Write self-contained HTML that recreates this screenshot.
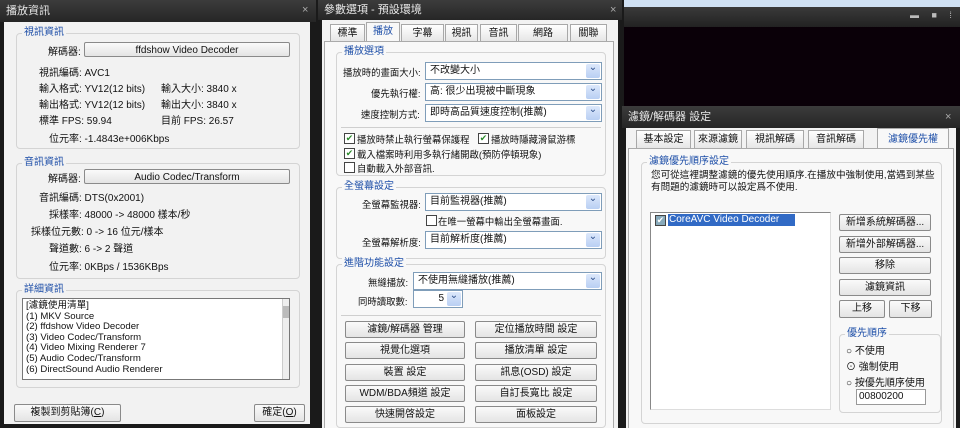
<!DOCTYPE html>
<html><head><meta charset="utf-8"><style>
*{margin:0;padding:0;box-sizing:border-box}
body{width:960px;height:428px;background:#1a1a1a;position:relative;overflow:hidden;font-family:"Liberation Sans","Noto Sans CJK TC",sans-serif;font-size:10px;color:#111}
.a{position:absolute;white-space:nowrap}
.tb{position:absolute;background:linear-gradient(#3c3c3c,#262626);color:#e8e8e8;font-size:11px;padding-left:6px;line-height:20px}
.x{position:absolute;color:#aaa;font-size:11px}
.body{position:absolute;background:#f2f2f2}
.g{position:absolute;border:1px solid #d4d4d4;border-radius:4px}
.gl{position:absolute;top:-8px;left:5px;background:#f2f2f2;color:#1e4fa8;padding:0 2px;font-size:10px;line-height:14px}
.btn{position:absolute;border:1px solid #8a8a8a;border-radius:2px;background:linear-gradient(#fafafa,#e4e4e4);text-align:center;font-size:10px;line-height:15px}
.cb{position:absolute;border:1px solid #7f9db9;background:#fff;height:18px;padding-left:4px;line-height:16px;font-size:10px}
.cb:after{content:"⌄";position:absolute;right:1px;top:1px;width:14px;height:14px;background:linear-gradient(#dce8fb,#b9cff3);border-radius:2px;color:#2d4f8a;font-size:10px;line-height:8px;text-align:center}
.ck{position:absolute;width:11px;height:11px;border:1px solid #444;background:#fff;font-size:9px;line-height:9px;color:#2a8a2a;text-align:center}
.tab{position:absolute;border:1px solid #a8a8a8;border-bottom:none;background:linear-gradient(#fff,#e6e6e6);text-align:center;font-size:10px;line-height:17px}
.ln{position:absolute;height:1px;background:#cfcfcf}
.s{font-size:9.4px}
</style></head><body>

<!-- Window 1 -->
<div class="tb" style="left:0;top:0;width:316px;height:22px;line-height:22px">播放資訊</div>
<div class="x" style="left:302px;top:4px">×</div>
<div class="body" style="left:4px;top:22px;width:306px;height:402px"></div>
<div class="g" style="left:16px;top:33px;width:284px;height:116px"><span class="gl">視訊資訊</span></div>
<div class="a" style="left:48px;top:43px">解碼器:</div>
<div class="btn" style="left:84px;top:42px;width:206px;height:15px">ffdshow Video Decoder</div>
<div class="a" style="left:39px;top:64px">視訊編碼: AVC1</div>
<div class="a" style="left:39px;top:80px">輸入格式: YV12(12 bits)</div><div class="a" style="left:161px;top:80px">輸入大小: 3840 x</div>
<div class="a" style="left:39px;top:96px">輸出格式: YV12(12 bits)</div><div class="a" style="left:161px;top:96px">輸出大小: 3840 x</div>
<div class="a" style="left:39px;top:112px">標準 FPS: 59.94</div><div class="a" style="left:161px;top:112px">目前 FPS: 26.57</div>
<div class="a" style="left:49px;top:130px">位元率: -1.4843e+006Kbps</div>
<div class="g" style="left:16px;top:163px;width:284px;height:116px"><span class="gl">音訊資訊</span></div>
<div class="a" style="left:48px;top:170px">解碼器:</div>
<div class="btn" style="left:84px;top:169px;width:206px;height:15px">Audio Codec/Transform</div>
<div class="a" style="left:39px;top:189px">音訊編碼: DTS(0x2001)</div>
<div class="a" style="left:49px;top:206px">採樣率: 48000 -&gt; 48000 樣本/秒</div>
<div class="a" style="left:31px;top:223px">採樣位元數: 0 -&gt; 16 位元/樣本</div>
<div class="a" style="left:49px;top:240px">聲道數: 6 -&gt; 2 聲道</div>
<div class="a" style="left:49px;top:258px">位元率: 0KBps / 1536KBps</div>
<div class="g" style="left:16px;top:290px;width:284px;height:98px"><span class="gl">詳細資訊</span></div>
<div class="a" style="left:22px;top:298px;width:268px;height:82px;border:1px solid #777;background:#fff"></div>
<div class="a" style="left:282px;top:299px;width:7px;height:80px;background:#eee;border-left:1px solid #ccc"></div>
<div class="a" style="left:283px;top:306px;width:6px;height:12px;background:#bbb"></div>
<div class="a" style="left:26px;top:301px;line-height:10.6px;font-size:9.6px">[濾鏡使用清單]<br>(1) MKV Source<br>(2) ffdshow Video Decoder<br>(3) Video Codec/Transform<br>(4) Video Mixing Renderer 7<br>(5) Audio Codec/Transform<br>(6) DirectSound Audio Renderer</div>
<div class="btn" style="left:14px;top:404px;width:107px;height:18px;line-height:16px">複製到剪貼簿(<u>C</u>)</div>
<div class="btn" style="left:254px;top:404px;width:51px;height:18px;line-height:16px">確定(<u>O</u>)</div>

<!-- Window 2 -->
<div class="tb" style="left:318px;top:0;width:304px;height:20px">參數選項 - 預設環境</div>
<div class="x" style="left:610px;top:4px">×</div>
<div class="body" style="left:322px;top:20px;width:296px;height:408px"></div>
<div class="tab" style="left:330px;top:24px;width:35px;height:17px">標準</div>
<div class="tab" style="left:366px;top:22px;width:34px;height:20px;background:#f8f8f8;color:#1e4fa8">播放</div>
<div class="tab" style="left:401px;top:24px;width:43px;height:17px">字幕</div>
<div class="tab" style="left:445px;top:24px;width:33px;height:17px">視訊</div>
<div class="tab" style="left:480px;top:24px;width:37px;height:17px">音訊</div>
<div class="tab" style="left:518px;top:24px;width:50px;height:17px">網路</div>
<div class="tab" style="left:570px;top:24px;width:37px;height:17px">關聯</div>
<div class="a" style="left:324px;top:41px;width:290px;height:387px;border:1px solid #aaa;border-bottom:none;background:#f8f8f8"></div>
<div class="g" style="left:336px;top:52px;width:270px;height:124px"><span class="gl" style="background:#f8f8f8">播放選項</span></div>
<div class="a s" style="left:343px;top:65px">播放時的畫面大小:</div><div class="cb" style="left:425px;top:62px;width:177px">不改變大小</div>
<div class="a s" style="left:371px;top:86px">優先執行權:</div><div class="cb" style="left:425px;top:83px;width:177px">高: 很少出現被中斷現象</div>
<div class="a s" style="left:361px;top:107px">速度控制方式:</div><div class="cb" style="left:425px;top:104px;width:177px">即時高品質速度控制(推薦)</div>
<div class="ln" style="left:341px;top:127px;width:260px"></div>
<div class="ck" style="left:344px;top:133px">✔</div><div class="a s" style="left:357px;top:132px">播放時禁止執行螢幕保護程</div>
<div class="ck" style="left:478px;top:133px">✔</div><div class="a s" style="left:491px;top:132px">播放時隱藏滑鼠游標</div>
<div class="ck" style="left:344px;top:148px">✔</div><div class="a s" style="left:357px;top:147px">載入檔案時利用多執行緒開啟(預防停頓現象)</div>
<div class="ck" style="left:344px;top:162px"></div><div class="a s" style="left:357px;top:161px">自動載入外部音訊.</div>
<div class="g" style="left:336px;top:187px;width:270px;height:72px"><span class="gl" style="background:#f8f8f8">全螢幕設定</span></div>
<div class="a s" style="left:362px;top:197px">全螢幕監視器:</div><div class="cb" style="left:425px;top:193px;width:177px">目前監視器(推薦)</div>
<div class="ck" style="left:426px;top:215px"></div><div class="a s" style="left:438px;top:214px">在唯一螢幕中輸出全螢幕畫面.</div>
<div class="a s" style="left:362px;top:235px">全螢幕解析度:</div><div class="cb" style="left:425px;top:231px;width:177px">目前解析度(推薦)</div>
<div class="g" style="left:336px;top:264px;width:270px;height:164px"><span class="gl" style="background:#f8f8f8">進階功能設定</span></div>
<div class="a s" style="left:368px;top:275px">無縫播放:</div><div class="cb" style="left:413px;top:272px;width:189px">不使用無縫播放(推薦)</div>
<div class="a s" style="left:358px;top:294px">同時讀取數:</div><div class="cb" style="left:413px;top:290px;width:50px;text-align:right;padding-right:18px">5</div>
<div class="ln" style="left:341px;top:315px;width:260px"></div>
<div class="btn" style="left:345px;top:321px;width:120px;height:17px">濾鏡/解碼器 管理</div><div class="btn" style="left:475px;top:321px;width:122px;height:17px">定位播放時間 設定</div>
<div class="btn" style="left:345px;top:342px;width:120px;height:17px">視覺化選項</div><div class="btn" style="left:475px;top:342px;width:122px;height:17px">播放清單 設定</div>
<div class="btn" style="left:345px;top:364px;width:120px;height:17px">裝置 設定</div><div class="btn" style="left:475px;top:364px;width:122px;height:17px">訊息(OSD) 設定</div>
<div class="btn" style="left:345px;top:385px;width:120px;height:17px">WDM/BDA頻道 設定</div><div class="btn" style="left:475px;top:385px;width:122px;height:17px">自訂長寬比 設定</div>
<div class="btn" style="left:345px;top:406px;width:120px;height:17px">快速開啓設定</div><div class="btn" style="left:475px;top:406px;width:122px;height:17px">面板設定</div>

<!-- Window 3 -->
<div class="a" style="left:624px;top:0;width:336px;height:7px;background:#cfe0f3"></div>
<div class="a" style="left:624px;top:7px;width:336px;height:20px;background:linear-gradient(#3a3a3a,#222)"></div>
<div class="a" style="left:910px;top:10px;color:#bbb;font-size:9px;letter-spacing:5px">▬ ■ ⁞ ✕</div>
<div class="a" style="left:624px;top:27px;width:336px;height:79px;background:#0a0008"></div>
<div class="tb" style="left:622px;top:106px;width:338px;height:22px;line-height:22px">濾鏡/解碼器 設定</div>
<div class="x" style="left:945px;top:111px">×</div>
<div class="body" style="left:626px;top:128px;width:330px;height:300px"></div>
<div class="tab" style="left:636px;top:130px;width:55px;height:18px">基本設定</div>
<div class="tab" style="left:694px;top:130px;width:48px;height:18px">來源濾鏡</div>
<div class="tab" style="left:746px;top:130px;width:58px;height:18px">視訊解碼</div>
<div class="tab" style="left:808px;top:130px;width:56px;height:18px">音訊解碼</div>
<div class="tab" style="left:877px;top:128px;width:72px;height:21px;background:#f8f8f8;color:#1e4fa8;line-height:22px">濾鏡優先權</div>
<div class="a" style="left:628px;top:148px;width:326px;height:280px;border:1px solid #aaa;border-bottom:none;background:#f8f8f8"></div>
<div class="g" style="left:641px;top:162px;width:301px;height:262px"><span class="gl" style="background:#f8f8f8">濾鏡優先順序設定</span></div>
<div class="a" style="left:651px;top:170px;line-height:12px;font-size:9.6px">您可從這裡調整濾鏡的優先使用順序.在播放中強制使用,當遇到某些<br>有問題的濾鏡時可以設定爲不使用.</div>
<div class="a" style="left:650px;top:212px;width:181px;height:198px;border:1px solid #888;border-right-color:#ddd;border-bottom-color:#ddd;background:#fff"></div>
<div class="ck" style="left:655px;top:215px;background:#8ab;color:#fff">✔</div>
<div class="a" style="left:668px;top:214px;width:127px;height:12px;background:#316ac5;color:#fff;line-height:12px;padding-left:1px">CoreAVC Video Decoder</div>
<div class="btn" style="left:839px;top:214px;width:92px;height:17px">新增系統解碼器...</div>
<div class="btn" style="left:839px;top:236px;width:92px;height:17px">新增外部解碼器...</div>
<div class="btn" style="left:839px;top:257px;width:92px;height:17px">移除</div>
<div class="btn" style="left:839px;top:279px;width:92px;height:17px">濾鏡資訊</div>
<div class="btn" style="left:839px;top:300px;width:46px;height:18px">上移</div>
<div class="btn" style="left:889px;top:300px;width:43px;height:18px">下移</div>
<div class="g" style="left:839px;top:334px;width:102px;height:79px"><span class="gl" style="background:#f8f8f8">優先順序</span></div>
<div class="a" style="left:846px;top:342px;font-size:10px">○ 不使用</div>
<div class="a" style="left:846px;top:358px;font-size:10px">⊙ 強制使用</div>
<div class="a" style="left:846px;top:374px;font-size:10px">○ 按優先順序使用</div>
<div class="a" style="left:856px;top:389px;width:70px;height:16px;border:1px solid #999;background:#fff;padding-left:2px;line-height:14px">00800200</div>
</body></html>
